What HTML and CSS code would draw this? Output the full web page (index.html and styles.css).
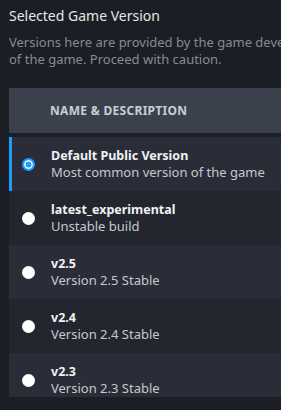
FILE: index.html
```html
<!DOCTYPE html>
<html lang="en">
  <head>
    <meta charset="UTF-8" />
    <meta name="viewport" content="width=device-width, initial-scale=1.0" />
    <title>Selected Game Version</title>
    <link rel="stylesheet" href="styles.css">
  </head>
  <body>
    <div class="panel">
      <h2 class="title">Selected Game Version</h2>
      <p class="note">
        Versions here are provided by the game developers to give you access to<br />
        of the game. Proceed with caution.
      </p>

      <div class="table">
        <div class="head">Name &amp; Description</div>
        <div class="rows">
          <div class="row selected">
            <span class="radio"></span>
            <div class="info">
              <div class="name">Default Public Version</div>
              <div class="desc">Most common version of the game</div>
            </div>
          </div>
          <div class="row">
            <span class="radio"></span>
            <div class="info">
              <div class="name">latest_experimental</div>
              <div class="desc">Unstable build</div>
            </div>
          </div>
          <div class="row">
            <span class="radio"></span>
            <div class="info">
              <div class="name">v2.5</div>
              <div class="desc">Version 2.5 Stable</div>
            </div>
          </div>
          <div class="row">
            <span class="radio"></span>
            <div class="info">
              <div class="name">v2.4</div>
              <div class="desc">Version 2.4 Stable</div>
            </div>
          </div>
          <div class="row">
            <span class="radio"></span>
            <div class="info">
              <div class="name">v2.3</div>
              <div class="desc">Version 2.3 Stable</div>
            </div>
          </div>
        </div>
      </div>
    </div>
  </body>
</html>
```

FILE: styles.css
```css
body {
  margin: 0;
  background-color: #1b1e25;
  font-family: "Noto Sans", Arial, sans-serif;
  overflow: hidden;
}
.panel {
  width: 640px;
  padding: 7px 0 0 9px;
}
.title {
  margin: 0;
  font-size: 14px;
  font-weight: normal;
  line-height: 18px;
  color: #e4e6e8;
}
.note {
  margin: 9px 0 0;
  font-size: 13px;
  line-height: 17px;
  color: #868c94;
  white-space: nowrap;
}
.table {
  margin-top: 20px;
  height: 309px;
  overflow: hidden;
}
.head {
  height: 45px;
  display: flex;
  align-items: center;
  padding-left: 41px;
  background-color: #3b414c;
  color: #c9ced5;
  font-size: 12px;
  font-weight: bold;
  text-transform: uppercase;
  letter-spacing: 0.3px;
}
.rows {
  margin-top: 4px;
}
.row {
  height: 54px;
  display: flex;
  align-items: center;
  padding-left: 13px;
  background-color: #23262e;
}
.row:nth-child(odd) {
  background-color: #2a2d37;
}
.row.selected {
  box-shadow: inset 3px 0 0 #1a9fff;
}
.radio {
  width: 13px;
  height: 13px;
  border-radius: 50%;
  background-color: #ffffff;
  margin-right: 16px;
  flex-shrink: 0;
}
.selected .radio {
  box-sizing: border-box;
  border: 2px solid #1a9fff;
  box-shadow: inset 0 0 0 1.5px #ffffff;
  background-color: #1a9fff;
}
.name {
  font-size: 12.5px;
  font-weight: bold;
  line-height: 17px;
  color: #f0f2f4;
}
.desc {
  font-size: 13px;
  line-height: 17px;
  color: #c5c9cf;
}
```
